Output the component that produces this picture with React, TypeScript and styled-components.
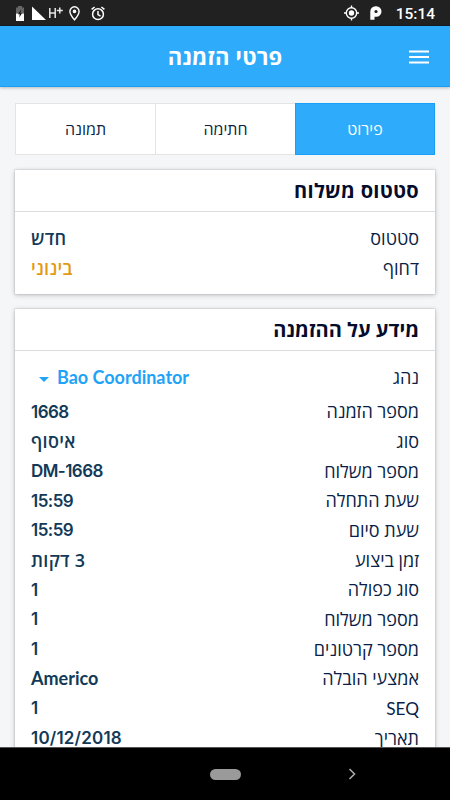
import React from "react";
import styled, { createGlobalStyle } from "styled-components";

const GlobalStyle = createGlobalStyle`
  *, *::before, *::after { box-sizing: border-box; }
  html, body { margin: 0; padding: 0; background: #f5f6f8; }
  body { overflow: hidden; }
`;

const Screen = styled.div`
  width: 450px;
  height: 800px;
  display: flex;
  flex-direction: column;
  overflow: hidden;
  background: #f5f6f8;
  font-family: "Open Sans", "Noto Sans", sans-serif;
`;

const StatusBar = styled.div`
  flex: none;
  height: 26px;
  display: flex;
  align-items: center;
  justify-content: space-between;
  padding: 1px 15px 0;
  background: #212121;
  border-bottom: 1px solid #141c22;
  color: #fff;
`;

const StatusGroup = styled.div`
  display: flex;
  align-items: center;
`;

const StatusIcon = styled.svg<{ $gap?: number }>`
  display: block;
  flex: none;
  margin-right: ${(p) => p.$gap ?? 0}px;
`;

const Clock = styled.span`
  font: 500 15.5px/24px Roboto, sans-serif;
  padding-top: 2px;
`;

const Header = styled.header`
  flex: none;
  height: 61px;
  display: grid;
  grid-template-columns: 32px 1fr 32px;
  align-items: center;
  padding: 1px 15px 0;
  background: #2eabfa;
  border-bottom: 1px solid #1b9ff5;
  box-shadow: 0 1px 3px rgba(0, 0, 0, 0.25);
`;

const HeaderTitle = styled.h1`
  grid-column: 2;
  margin: 0;
  padding-bottom: 2px;
  text-align: center;
  color: #fff;
  font-size: 22px;
  font-weight: 700;
  line-height: 30px;
  letter-spacing: 0.2px;
`;

const MenuButton = styled.button`
  width: 32px;
  height: 32px;
  padding: 0;
  border: 0;
  background: none;
  display: grid;
  place-items: center;
`;

const Content = styled.main`
  flex: 1;
  min-height: 0;
  overflow: hidden;
  display: flex;
  flex-direction: column;
  gap: 15px;
  padding: 16px 15px 0;
  direction: rtl;
`;

const Tabs = styled.div`
  flex: none;
  height: 52px;
  display: grid;
  grid-template-columns: repeat(3, 1fr);
`;

const Tab = styled.button<{ $active?: boolean }>`
  padding: 0;
  border: 1px solid ${(p) => (p.$active ? "#189ff8" : "#e3e4e6")};
  border-right-width: ${(p) => (p.$active ? 1 : 0)}px;
  background: ${(p) => (p.$active ? "#2eabfa" : "#fff")};
  color: ${(p) => (p.$active ? "#fff" : "#0b1f45")};
  font: 400 16px/22px "Open Sans", "Noto Sans", sans-serif;
`;

const Card = styled.section`
  flex: none;
  background: #fff;
  box-shadow: 0 0 1px 1px rgba(0, 0, 0, 0.06), 0 1px 5px rgba(0, 0, 0, 0.22);
`;

const CardTitle = styled.h2<{ $tracking?: number }>`
  height: 42px;
  margin: 0;
  padding: 0 16px;
  border-bottom: 1px solid #dcdddf;
  color: #050c2b;
  font-size: 20px;
  font-weight: 700;
  line-height: 41px;
  letter-spacing: ${(p) => p.$tracking ?? 0}px;
`;

const Rows = styled.div`
  padding: 12px 16px 11px;
`;

const Row = styled.div<{ $tall?: boolean }>`
  height: ${(p) => (p.$tall ? 33.8 : 29.7)}px;
  display: flex;
  align-items: ${(p) => (p.$tall ? "flex-start" : "center")};
  justify-content: space-between;
  line-height: 29.7px;
`;

const Label = styled.span<{ $latin?: boolean }>`
  color: #0a1f47;
  font-family: ${(p) => (p.$latin ? "Lato, " : "")}"Open Sans", "Noto Sans", sans-serif;
  font-size: ${(p) => (p.$latin ? 17.2 : 18)}px;
`;

type Script = "hebrew" | "name" | "code" | "date";

const faces: Record<Script, { font: string; tracking: number }> = {
  hebrew: { font: `600 18px/29.7px "Open Sans", "Noto Sans", sans-serif`, tracking: 0.3 },
  name: { font: `700 18px/29.7px Lato, sans-serif`, tracking: 0 },
  code: { font: `600 17px/31px Inter, sans-serif`, tracking: -0.55 },
  date: { font: `600 17px/31px Inter, sans-serif`, tracking: 0.2 },
};

const Value = styled.span<{ $tone?: string; $script?: Script }>`
  color: ${(p) => p.$tone ?? "#123a58"};
  font: ${(p) => faces[p.$script ?? "hebrew"].font};
  letter-spacing: ${(p) => faces[p.$script ?? "hebrew"].tracking}px;
`;

const DriverPicker = styled.span`
  display: flex;
  align-items: center;
  direction: ltr;
  gap: 8px;
  padding-left: 8px;
`;

const DropArrow = styled.svg`
  display: block;
  margin-top: 3px;
`;

const NavBar = styled.nav`
  flex: none;
  height: 53px;
  display: grid;
  grid-template-columns: 1fr 1fr 1fr;
  align-items: center;
  justify-items: center;
  background: #000;
  border-top: 1px solid #555;
`;

const HomePill = styled.span`
  grid-column: 2;
  width: 31px;
  height: 11px;
  border-radius: 6px;
  background: #9a9a9a;
`;

const NavChevron = styled.svg`
  display: block;
  justify-self: start;
  margin-left: 48px;
`;

type Detail = { label: string; value: string; script?: Script };

const details: Detail[] = [
  { label: "מספר הזמנה", value: "1668", script: "code" },
  { label: "סוג", value: "איסוף" },
  { label: "מספר משלוח", value: "DM-1668", script: "code" },
  { label: "שעת התחלה", value: "15:59", script: "code" },
  { label: "שעת סיום", value: "15:59", script: "code" },
  { label: "זמן ביצוע", value: "3 דקות" },
  { label: "סוג כפולה", value: "1", script: "code" },
  { label: "מספר משלוח", value: "1", script: "code" },
  { label: "מספר קרטונים", value: "1", script: "code" },
  { label: "אמצעי הובלה", value: "Americo", script: "name" },
  { label: "SEQ", value: "1", script: "code" },
  { label: "תאריך", value: "10/12/2018", script: "date" },
];

export default function App() {
  return (
    <>
      <GlobalStyle />
      <Screen>
        <StatusBar>
          <StatusGroup>
            <StatusIcon $gap={7} width="10" height="15" viewBox="0 0 10 15">
              <path d="M3 0h4v1.500h2v6H1v-6h2z" fill="#666" />
              <path d="M1 7.500h8V15H1z" fill="#fff" />
              <path d="M6 3.500 3 8.200h1.700L4.200 11.500 7 7.200H5.400z" fill="#111" />
            </StatusIcon>
            <StatusIcon $gap={3} width="14" height="14" viewBox="0 0 14 14">
              <path d="M0 .5 14 14H0z" fill="#fff" />
            </StatusIcon>
            <StatusIcon $gap={6} width="14" height="14" viewBox="0 0 14 14" fill="none" stroke="#e8e8e8" strokeWidth="1.500">
              <path d="M.8 2v10M6.200 2v10M.8 7h5.400M7.800 4.500h6M10.800 1.500v6" />
            </StatusIcon>
            <StatusIcon $gap={11} width="11" height="15" viewBox="0 0 11 15">
              <path d="M5.500.8a4.600 4.600 0 0 1 4.600 4.600c0 3-4.600 8.400-4.600 8.400S.9 8.400.9 5.400A4.600 4.600 0 0 1 5.500.8z" fill="none" stroke="#fff" strokeWidth="1.400" />
              <circle cx="5.500" cy="5.400" r="1.800" fill="#fff" />
            </StatusIcon>
            <StatusIcon width="14" height="15" viewBox="0 0 14 15" fill="none" stroke="#fff" strokeWidth="1.500">
              <circle cx="7" cy="8.200" r="5.400" />
              <path d="M7 5v3.500l2.500 1.700M.6 3.400 3.600 1M13.400 3.400 10.400 1" />
            </StatusIcon>
          </StatusGroup>
          <StatusGroup>
            <StatusIcon $gap={11} width="15" height="16" viewBox="0 0 15 16" fill="none" stroke="#fff" strokeWidth="1.400">
              <circle cx="7.500" cy="8" r="5.200" />
              <circle cx="7.500" cy="8" r="2.700" fill="#fff" stroke="none" />
              <path d="M7.500.5v2.500M7.500 13v2.500M0 8h2.500M12.500 8H15" />
            </StatusIcon>
            <StatusIcon $gap={14} width="12" height="14" viewBox="0 0 12 14">
              <path d="M.3 13.700V5.500A5.200 5.200 0 0 1 5.500.300H6.300a5.200 5.200 0 0 1 0 10.400H4.500v3z" fill="#fff" />
              <circle cx="6" cy="5.500" r="1.600" fill="#212121" />
            </StatusIcon>
            <Clock>15:14</Clock>
          </StatusGroup>
        </StatusBar>

        <Header>
          <HeaderTitle dir="rtl">פרטי הזמנה</HeaderTitle>
          <MenuButton aria-label="תפריט">
            <svg width="20" height="14" viewBox="0 0 20 14">
              <path d="M0 1.500h20M0 7h20M0 12.500h20" stroke="#fff" strokeWidth="2" />
            </svg>
          </MenuButton>
        </Header>

        <Content>
          <Tabs>
            <Tab $active>פירוט</Tab>
            <Tab>חתימה</Tab>
            <Tab>תמונה</Tab>
          </Tabs>

          <Card>
            <CardTitle $tracking={0.3}>סטטוס משלוח</CardTitle>
            <Rows>
              <Row>
                <Label>סטטוס</Label>
                <Value>חדש</Value>
              </Row>
              <Row>
                <Label>דחוף</Label>
                <Value $tone="#e39a12">בינוני</Value>
              </Row>
            </Rows>
          </Card>

          <Card>
            <CardTitle>מידע על ההזמנה</CardTitle>
            <Rows>
              <Row $tall>
                <Label>נהג</Label>
                <DriverPicker>
                  <DropArrow width="10" height="5" viewBox="0 0 10 5">
                    <path d="M0 0h10L5 5z" fill="#1fa3f7" />
                  </DropArrow>
                  <Value $script="name" $tone="#1fa3f7">Bao Coordinator</Value>
                </DriverPicker>
              </Row>
              {details.map((d, i) => (
                <Row key={i}>
                  <Label $latin={d.label === "SEQ"}>{d.label}</Label>
                  <Value $script={d.script}>{d.value}</Value>
                </Row>
              ))}
            </Rows>
          </Card>
        </Content>

        <NavBar>
          <HomePill />
          <NavChevron width="8" height="12" viewBox="0 0 8 12" fill="none" stroke="#aaa" strokeWidth="1.600">
            <path d="m1.500 1 5 5-5 5" />
          </NavChevron>
        </NavBar>
      </Screen>
    </>
  );
}
